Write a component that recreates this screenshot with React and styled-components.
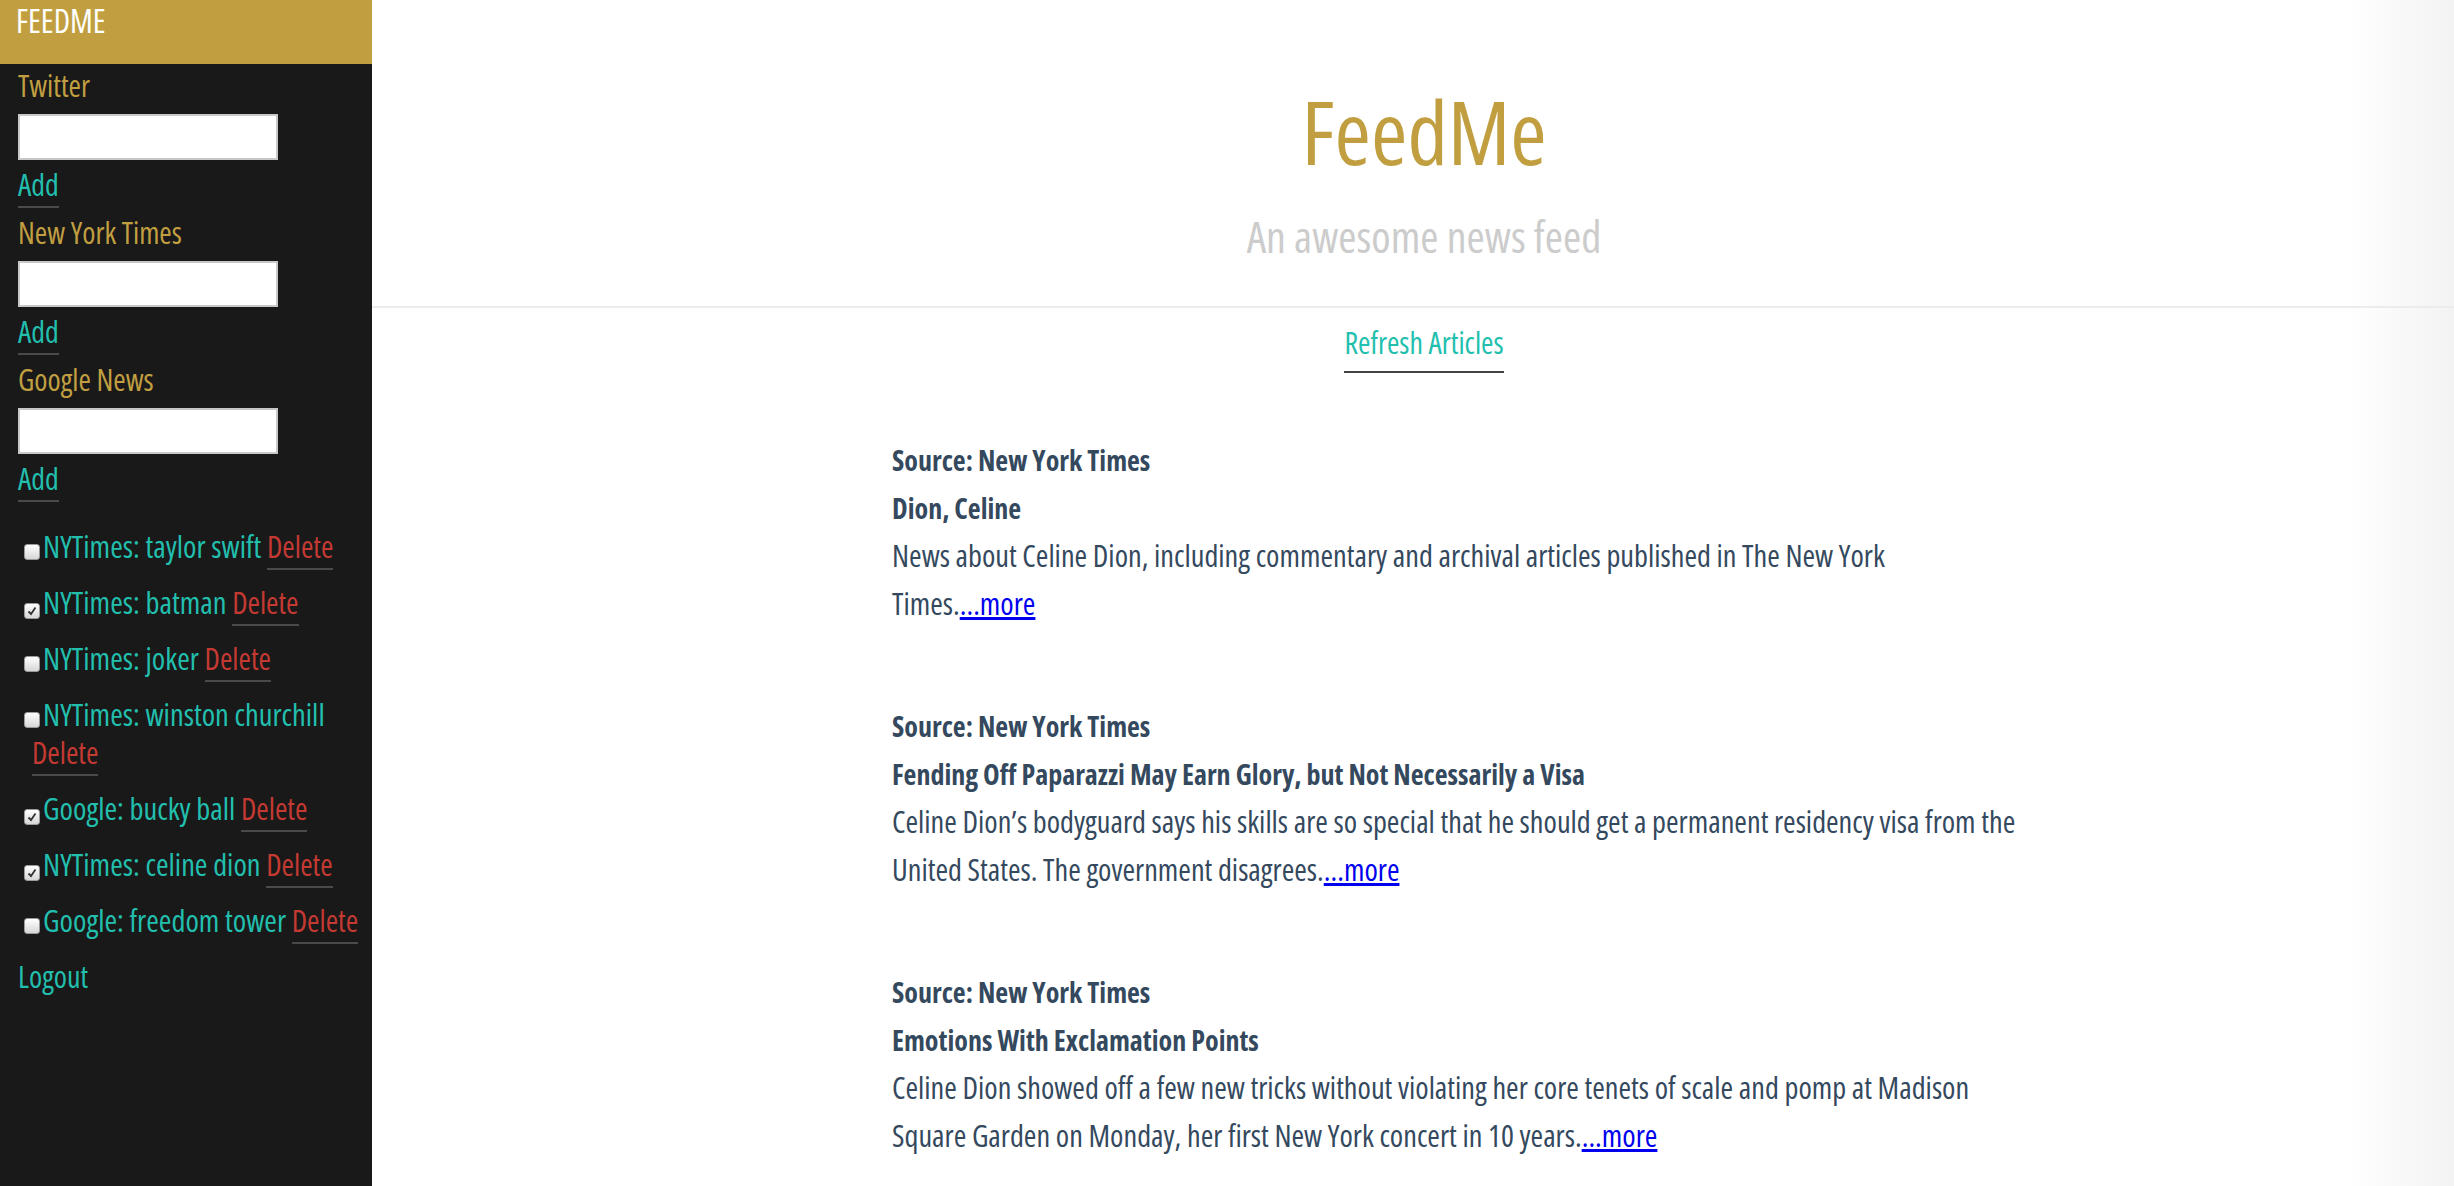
import React from "react";
import styled, { createGlobalStyle } from "styled-components";

const GlobalStyle = createGlobalStyle`
  html, body {
    margin: 0;
    padding: 0;
  }
  body {
    font-family: "Open Sans", "Liberation Sans", sans-serif;
    font-stretch: 75%;
  }
`;

const gold = "#c19f41";
const teal = "#22bfae";
const red = "#c43a33";

const subscriptions = [
  { label: "NYTimes: taylor swift", checked: false },
  { label: "NYTimes: batman", checked: true },
  { label: "NYTimes: joker", checked: false },
  { label: "NYTimes: winston churchill", checked: false },
  { label: "Google: bucky ball", checked: true },
  { label: "NYTimes: celine dion", checked: true },
  { label: "Google: freedom tower", checked: false },
];

const articles = [
  {
    source: "New York Times",
    title: "Dion, Celine",
    text: "News about Celine Dion, including commentary and archival articles published in The New York Times.",
  },
  {
    source: "New York Times",
    title: "Fending Off Paparazzi May Earn Glory, but Not Necessarily a Visa",
    text: "Celine Dion’s bodyguard says his skills are so special that he should get a permanent residency visa from the United States. The government disagrees.",
  },
  {
    source: "New York Times",
    title: "Emotions With Exclamation Points",
    text: "Celine Dion showed off a few new tricks without violating her core tenets of scale and pomp at Madison Square Garden on Monday, her first New York concert in 10 years.",
  },
];

export default function App() {
  return (
    <Page>
      <GlobalStyle />
      <Sidebar>
        <Brand>FEEDME</Brand>
        <SidebarBody>
          {["Twitter", "New York Times", "Google News"].map((feed) => (
            <FeedGroup key={feed}>
              <FeedLabel>{feed}</FeedLabel>
              <FeedInput type="text" />
              <AddRow>
                <UnderLink href="#">Add</UnderLink>
              </AddRow>
            </FeedGroup>
          ))}
          <SubList>
            {subscriptions.map((s) => (
              <SubItem key={s.label}>
                <Check>
                  {s.checked && (
                    <svg width="10" height="10" viewBox="0 0 10 10">
                      <path d="M1.5 5.5 L4 8 L8.5 1.5" fill="none" stroke="#333" strokeWidth="1.8" />
                    </svg>
                  )}
                </Check>
                {s.label} <UnderLink href="#" $color={red}>Delete</UnderLink>
              </SubItem>
            ))}
          </SubList>
          <Logout href="#">Logout</Logout>
        </SidebarBody>
      </Sidebar>
      <Main>
        <Header>
          <Title>FeedMe</Title>
          <Subtitle>An awesome news feed</Subtitle>
        </Header>
        <RefreshRow>
          <UnderLink href="#" $gap={8} $line="#444">Refresh Articles</UnderLink>
        </RefreshRow>
        <ArticleList>
          {articles.map((a) => (
            <Article key={a.title}>
              <Strong>Source: {a.source}</Strong>
              <Strong>{a.title}</Strong>
              <Summary>
                {a.text}
                <More href="#">...more</More>
              </Summary>
            </Article>
          ))}
        </ArticleList>
      </Main>
    </Page>
  );
}

const Page = styled.div`
  display: flex;
  min-height: 100vh;
`;

const Sidebar = styled.aside`
  width: 372px;
  flex-shrink: 0;
  background: #191919;
`;

const Brand = styled.div`
  height: 64px;
  box-sizing: border-box;
  padding: 1px 16px 0;
  background: ${gold};
  color: #fff;
  font-size: 32px;
  line-height: 40px;
`;

const SidebarBody = styled.div`
  padding: 2px 6px 0 18px;
`;

const FeedGroup = styled.div`
  margin-bottom: 8px;
`;

const FeedLabel = styled.div`
  color: ${gold};
  font-size: 30px;
  line-height: 40px;
`;

const FeedInput = styled.input`
  display: block;
  box-sizing: border-box;
  width: 260px;
  height: 46px;
  margin: 8px 0 5px;
  border: 2px solid #c8c8c8;
  background: #fff;
  outline: none;
`;

const AddRow = styled.div`
  font-size: 30px;
  line-height: 40px;
`;

const UnderLink = styled.a`
  color: ${(p) => p.$color || teal};
  font-size: 30px;
  text-decoration: none;
  padding-bottom: ${(p) => p.$gap ?? 1}px;
  border-bottom: 2px solid ${(p) => p.$line || "#4a4a4a"};
`;

const SubList = styled.ul`
  list-style: none;
  margin: 28px 0 0;
  padding: 0 0 0 14px;
`;

const SubItem = styled.li`
  color: ${teal};
  font-size: 30.5px;
  line-height: 38px;
  text-indent: -8px;
  margin-bottom: 17px;
`;

const Check = styled.span`
  display: inline-flex;
  align-items: center;
  justify-content: center;
  text-indent: 0;
  width: 16px;
  height: 16px;
  box-sizing: border-box;
  margin-right: 3px;
  vertical-align: -2px;
  border-radius: 3px;
  border: 1px solid #9a9a9a;
  background: linear-gradient(#ffffff, #d6d6d6);
`;

const Logout = styled.a`
  display: block;
  margin-top: 5px;
  color: ${teal};
  font-size: 30px;
  line-height: 40px;
  text-decoration: none;
`;

const Main = styled.main`
  flex: 1;
  background: linear-gradient(to right, #fff calc(100% - 110px), #f3f3f3);
`;

const Header = styled.header`
  padding: 83px 0 45px 22px;
  text-align: center;
  border-bottom: 2px solid #ececec;
`;

const Title = styled.h1`
  margin: 0;
  color: ${gold};
  font-size: 88px;
  font-weight: normal;
  line-height: 96px;
`;

const Subtitle = styled.h2`
  margin: 32px 0 0;
  color: #cccccc;
  font-size: 44px;
  font-weight: normal;
  line-height: 50px;
`;

const RefreshRow = styled.div`
  padding: 17px 0 0 22px;
  text-align: center;
  line-height: 36px;
`;

const ArticleList = styled.div`
  margin: 70px 0 0 520px;
  width: 1130px;
  color: #34495e;
`;

const Article = styled.div`
  margin-bottom: 74px;
`;

const Strong = styled.div`
  font-size: 28px;
  font-weight: bold;
  line-height: 48px;
`;

const Summary = styled.div`
  font-size: 30.4px;
  line-height: 48px;
`;

const More = styled.a`
  color: #0000ee;
  text-decoration: underline;
`;
